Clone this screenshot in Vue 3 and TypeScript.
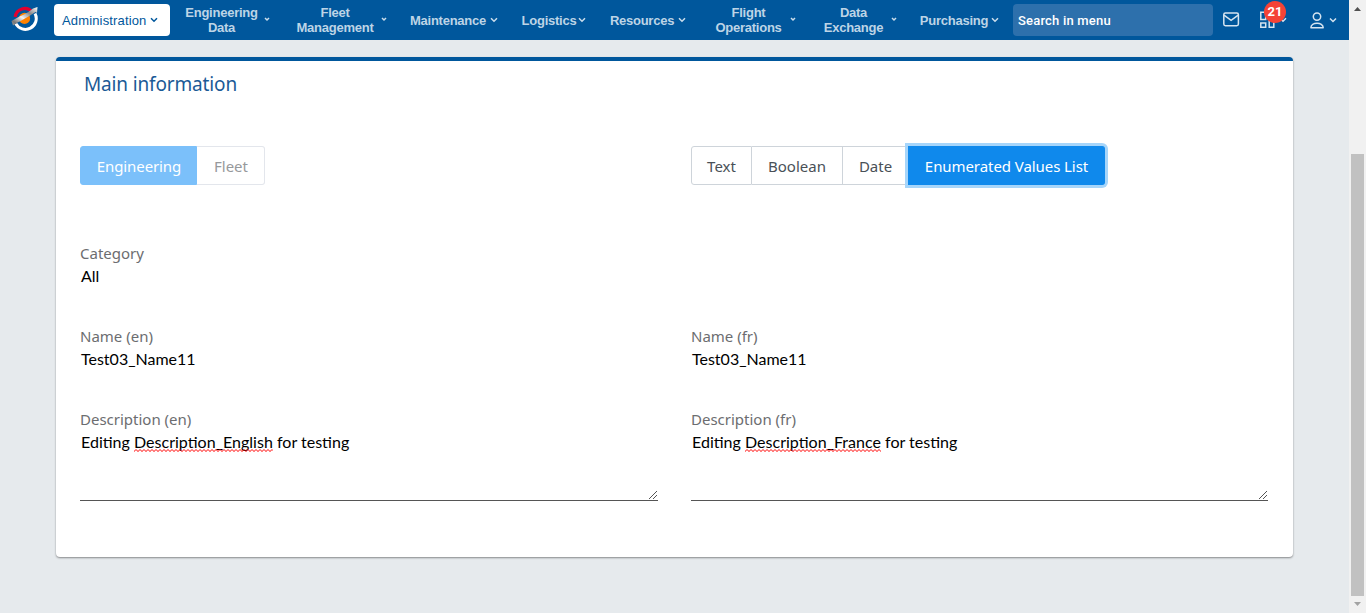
<script setup lang="ts">
interface MenuItem {
  lines: string[]
  gap: number
  label: number
  width: number
}

const menu: MenuItem[] = [
  { lines: ['Engineering', 'Data'], gap: 16, label: 71, width: 84 },
  { lines: ['Fleet', 'Management'], gap: 26, label: 78, width: 91 },
  { lines: ['Maintenance'], gap: 23, label: 76, width: 88 },
  { lines: ['Logistics'], gap: 24, label: 54, width: 64 },
  { lines: ['Resources'], gap: 24, label: 64, width: 76 },
  { lines: ['Flight', 'Operations'], gap: 30, label: 65, width: 80 },
  { lines: ['Data', 'Exchange'], gap: 28, label: 59, width: 73 },
  { lines: ['Purchasing'], gap: 23, label: 68, width: 79 },
]

const types = [
  { label: 'Text', width: 61 },
  { label: 'Boolean', width: 91 },
  { label: 'Date', width: 66 },
  { label: 'Enumerated Values List', width: 197 },
]

const names = [
  { label: 'Name (en)', value: 'Test03_Name11' },
  { label: 'Name (fr)', value: 'Test03_Name11' },
]

const descriptions = [
  { label: 'Description (en)', word: 'Description_English' },
  { label: 'Description (fr)', word: 'Description_France' },
]
</script>

<template>
  <div class="app">
    <div class="page">
      <header class="topbar">
        <svg class="logo" width="28" height="26" viewBox="0 0 28 26">
          <defs>
            <linearGradient id="wing" x1="0" y1="1" x2="1" y2="0">
              <stop offset="0" stop-color="#999" />
              <stop offset=".15" stop-color="#777" />
              <stop offset=".42" stop-color="#f2f2f2" />
              <stop offset=".68" stop-color="#888" />
              <stop offset="1" stop-color="#fff" />
            </linearGradient>
          </defs>
          <path d="M4.2 12A9.6 9.6 0 0 1 21 6.8" fill="none" stroke="#e3002f" stroke-width="3.2" />
          <path d="M24 8.5A10.6 10.6 0 0 1 4.8 18.6" fill="none" stroke="#fff" stroke-width="3" />
          <circle cx="13.5" cy="13.4" r="5.6" fill="#ff8200" />
          <path d="M.5 16 8.5 11.5C14 9.5 19 6 22 3.4L26.5 2 26 8 24.5 7C18 11.5 8 16.5 2 20.5Z" fill="url(#wing)" />
        </svg>
        <button class="active-menu">
          <span>Administration</span>
          <svg width="8" height="6" viewBox="0 0 8 6"><path d="M1 1.2 4 4.2 7 1.2" /></svg>
        </button>
        <nav class="menu">
          <a
            v-for="item in menu"
            :key="item.lines.join()"
            class="menu-item"
            :style="{ width: item.width + 'px', marginLeft: item.gap + 'px' }"
          >
            <span class="menu-label" :style="{ width: item.label + 'px' }">
              <span v-for="line in item.lines" :key="line">{{ line }}</span>
            </span>
            <svg v-if="item.lines.length > 1" class="small" width="6" height="5" viewBox="0 0 6 5"><path d="M1 1 3 3 5 1" /></svg>
            <svg v-else width="8" height="6" viewBox="0 0 8 6"><path d="M1 1.2 4 4.2 7 1.2" /></svg>
          </a>
        </nav>
        <input class="search" placeholder="Search in menu" />
        <svg class="mail" width="17" height="15" viewBox="0 0 17 15">
          <rect x=".8" y=".9" width="14.6" height="12.8" rx="1.6" />
          <path d="M1 3.2 8.1 8.4 15.2 3.2" />
        </svg>
        <div class="apps">
          <svg width="27" height="18" viewBox="0 0 27 18">
            <path d="M.8 1.2H5.7V8.4H.8ZM9.2 1.2H13.8V5.4H9.2ZM.8 12H5.7V16.2H.8ZM9.2 9H13.8V16.2H9.2Z" />
            <path class="arrow" d="M20 7.2 23 10.2 26 7.2" />
          </svg>
          <span class="badge">21</span>
        </div>
        <svg class="user" width="28" height="17" viewBox="0 0 28 17">
          <circle cx="7" cy="4.6" r="3.7" />
          <path d="M.9 15.8C.9 9.7 13.2 9.7 13.2 15.8Z" stroke-linejoin="round" />
          <path class="arrow" d="M20 6.5 23 9.5 26 6.5" />
        </svg>
      </header>

      <main class="card">
        <h1>Main information</h1>
        <div class="row toggles">
          <div class="group muted">
            <button class="option on">Engineering</button>
            <button class="option">Fleet</button>
          </div>
          <div class="group">
            <button
              v-for="(type, i) in types"
              :key="type.label"
              class="option"
              :class="{ focused: i === types.length - 1 }"
              :style="{ width: type.width + 'px' }"
            >{{ type.label }}</button>
          </div>
        </div>
        <div class="row category">
          <div class="field">
            <label>Category</label>
            <div class="value">All</div>
          </div>
        </div>
        <div class="row names">
          <div v-for="field in names" :key="field.label" class="field">
            <label>{{ field.label }}</label>
            <div class="value">{{ field.value }}</div>
          </div>
        </div>
        <div class="row">
          <div v-for="(field, i) in descriptions" :key="field.label" class="field area">
            <label>{{ field.label }}</label>
            <div class="value description">Editing <span class="misspelt">{{ field.word }}<svg class="squiggle" height="3">
              <pattern :id="'wave' + i" width="4" height="3" patternUnits="userSpaceOnUse"><path d="M-1 3.5 2 .5 5 3.5" /></pattern>
              <rect width="100%" height="3" :fill="'url(#wave' + i + ')'" />
            </svg></span> for testing</div>
            <svg class="grip" width="9" height="9" viewBox="0 0 9 9" shape-rendering="crispEdges">
              <path d="M.5 8.5 8.5.5M4.5 8.5 8.5 4.5" />
            </svg>
          </div>
        </div>
      </main>
    </div>
    <aside class="scrollbar">
      <svg width="7" height="4" viewBox="0 0 7 4"><path d="M0 4 3.5 0 7 4Z" fill="#505050" /></svg>
      <div class="thumb"></div>
      <svg width="7" height="4" viewBox="0 0 7 4"><path d="M0 0H7L3.5 4Z" fill="#a3a3a3" /></svg>
    </aside>
  </div>
</template>

<style>
body { overflow: hidden; }
</style>

<style scoped>
* { box-sizing: border-box; }
.app { display: flex; width: 1366px; height: 613px; background: #e6eaed; font-family: "Noto Sans", sans-serif; }
.page { width: 1349px; }
button { font: inherit; padding: 0; border: 0; }
svg { flex: none; }
.topbar { height: 40px; display: flex; align-items: center; background: #00579c; font-family: Roboto, sans-serif; font-size: 13px; }
.topbar path, .topbar rect, .topbar circle { fill: none; }
.topbar .logo { width: 28px; margin: -4px 1px 0 11px; }
.topbar .logo circle { fill: #ff8200; }
.topbar .logo path:last-child { fill: url(#wing); }
.active-menu { width: 116px; height: 32px; margin-left: 14px; padding: 0 12px 0 8px; display: flex; align-items: center; justify-content: space-between; border-radius: 4px; background: #fff; color: #00579c; font-family: "Liberation Sans", Arial, sans-serif; letter-spacing: .15px; }
.active-menu path { stroke: #00579c; stroke-width: 1.5; }
.menu { display: flex; height: 40px; align-items: center; }
.menu-item { display: flex; align-items: center; justify-content: space-between; color: #bdd4e6; font-family: "Liberation Sans", Arial, sans-serif; font-weight: 700; line-height: 15px; letter-spacing: -.25px; }
.menu-item path { stroke: #cbdeec; stroke-width: 1.5; }
.menu-item .small { margin-top: -2px; }
.menu-label { display: flex; flex-direction: column; align-items: center; white-space: nowrap; }
.search { width: 200px; height: 32px; margin-left: 14px; padding: 0 5px; border: 0; border-radius: 4px; background: #2d70ac; font: 500 13px Roboto, sans-serif; letter-spacing: .2px; }
.search::placeholder { color: #fff; opacity: 1; }
.mail { margin: -2px 0 0 10px; }
.mail, .apps svg, .user { stroke: #d5e4f0; stroke-width: 1.5; }
.apps { position: relative; width: 27px; height: 18px; margin-left: 20px; }
.apps svg { display: block; }
.badge { position: absolute; left: 4px; top: -10px; width: 22px; height: 22px; border-radius: 50%; background: #f44336; color: #fff; font: 700 13px/22px Roboto, sans-serif; text-align: center; }
.user { margin-left: 23px; }
.card { width: 1237px; height: 500px; margin: 17px 0 0 56px; padding: 0 24px; background: #fff; border-top: 4px solid #00579c; border-radius: 4px; box-shadow: 0 1px 2px rgba(0,0,0,.42); }
h1 { margin: 0; padding: 9px 0 0 4px; height: 85px; color: #1b5a96; font-weight: 400; font-size: 19px; line-height: 28px; letter-spacing: -.15px; }
.row { display: grid; grid-template-columns: 578px 577px; column-gap: 33px; }
.toggles { height: 96px; }
.category, .names { height: 83px; }
.group { display: flex; height: 39px; width: max-content; }
.option { border: 1px solid #ced4da; border-left-width: 0; background: #fff; color: #495057; font-size: 15px; line-height: 35px; padding-top: 2px; text-align: center; white-space: nowrap; }
.option:first-child { border-left-width: 1px; border-radius: 3px 0 0 3px; }
.option:last-child { border-radius: 0 3px 3px 0; }
.muted .option { width: 68px; padding-left: 1px; border-color: #e3e6ec; color: #97999c; }
.muted .option.on { width: 117px; background: #7bc0fa; border-color: #7bc0fa; color: #fff; letter-spacing: -.1px; }
.option.focused { border-color: #0f89ec; background: #0f89ec; color: #fff; box-shadow: 0 0 0 3px #a6d5fa; padding-left: 1px; margin-left: -1px; letter-spacing: -.07px; }
.field label { display: block; height: 22px; line-height: 22px; font-size: 15px; color: #6c6d70; }
.value { height: 24px; padding-left: 1px; line-height: 24px; font-family: Lato, sans-serif; font-size: 16px; color: #000; white-space: pre; }
.description { font-size: 16.05px; }
.area { position: relative; height: 93px; border-bottom: 1px solid #555; }
.misspelt { position: relative; }
.squiggle { position: absolute; left: 0; bottom: -1px; width: 100%; }
.squiggle path { fill: none; stroke: #f00; stroke-width: 1; }
.grip { position: absolute; right: 1px; bottom: 0; stroke: #555; }
.scrollbar { width: 17px; display: flex; flex-direction: column; align-items: center; justify-content: space-between; padding: 7px 0; background: #f1f1f1; }
.thumb { width: 13px; height: 442px; margin-top: 137px; background: #c1c1c1; }
</style>
